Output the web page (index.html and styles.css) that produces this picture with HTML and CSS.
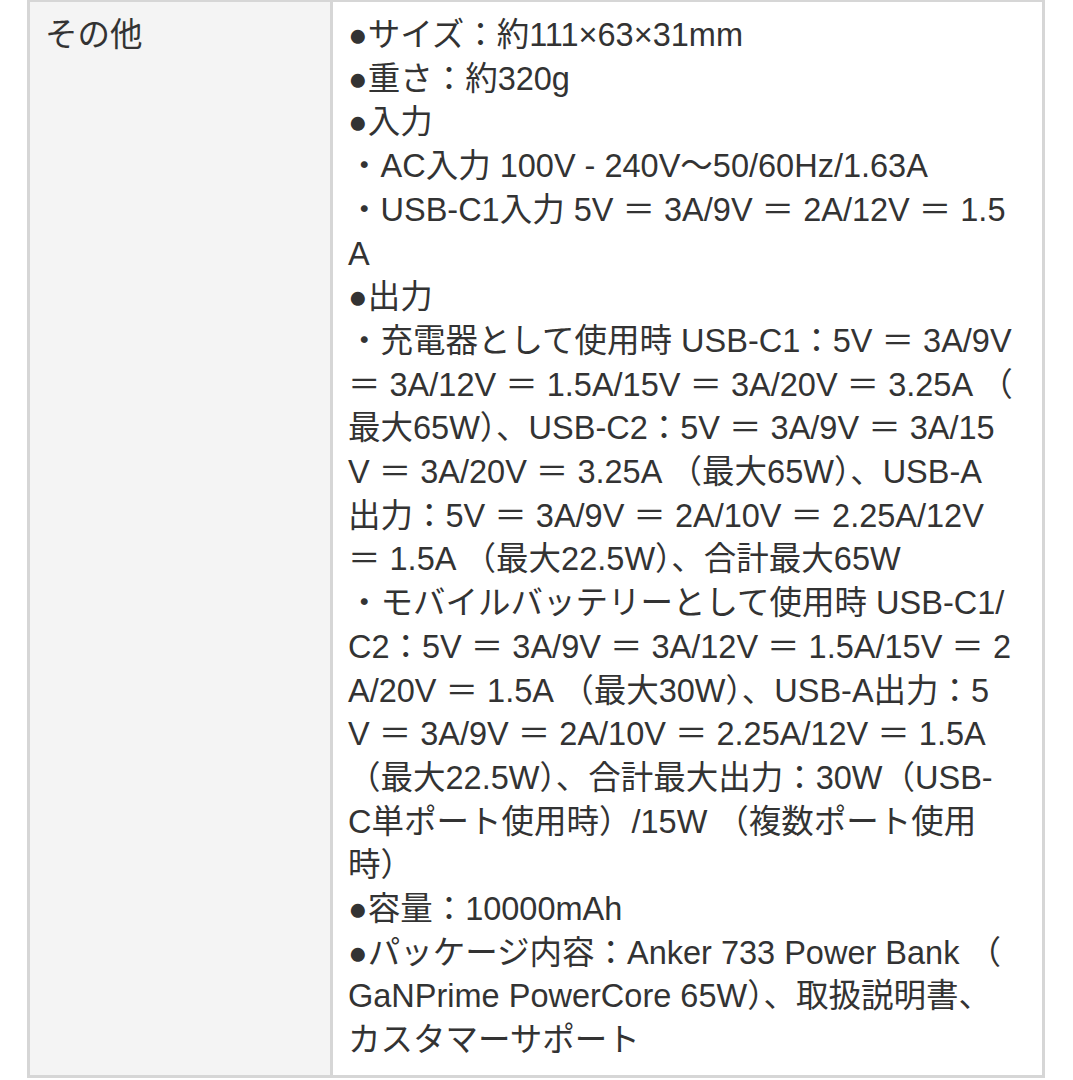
FILE: index.html
```html
<!DOCTYPE html>
<html lang="ja">
<head>
<meta charset="utf-8">
<title>仕様</title>
<link rel="stylesheet" href="styles.css">
</head>
<body>
<table class="spec">
  <tr>
    <th class="spec-label">その他</th>
    <td class="spec-value">●サイズ：約111×63×31mm<br>●重さ：約320g<br>●入力<br>・AC入力 100V - 240V〜50/60Hz/1.63A<br>・USB-C1入力 5V ＝ 3A/9V ＝ 2A/12V ＝ 1.5<br>A<br>●出力<br>・充電器として使用時 USB-C1：5V ＝ 3A/9V<br>＝ 3A/12V ＝ 1.5A/15V ＝ 3A/20V ＝ 3.25A （<br>最大65W）、USB-C2：5V ＝ 3A/9V ＝ 3A/15<br>V ＝ 3A/20V ＝ 3.25A （最大65W）、USB-A<br>出力：5V ＝ 3A/9V ＝ 2A/10V ＝ 2.25A/12V<br>＝ 1.5A （最大22.5W）、合計最大65W<br>・モバイルバッテリーとして使用時 USB-C1/<br>C2：5V ＝ 3A/9V ＝ 3A/12V ＝ 1.5A/15V ＝ 2<br>A/20V ＝ 1.5A （最大30W）、USB-A出力：5<br>V ＝ 3A/9V ＝ 2A/10V ＝ 2.25A/12V ＝ 1.5A<br>（最大22.5W）、合計最大出力：30W（USB-<br>C単ポート使用時）/15W （複数ポート使用<br>時）<br>●容量：10000mAh<br>●パッケージ内容：Anker 733 Power Bank （<br>GaNPrime PowerCore 65W）、取扱説明書、<br>カスタマーサポート</td>
  </tr>
</table>
</body>
</html>
```
FILE: styles.css
```css
html, body {
  margin: 0;
  padding: 0;
  background: #ffffff;
}

body {
  font-family: "Liberation Sans", "Noto Sans CJK JP", sans-serif;
  color: #333333;
  font-size: 32.5px;
  line-height: 43.7px;
}

.spec {
  border-collapse: collapse;
  table-layout: fixed;
  width: 1018px;
  margin: -1px 0 0 27px;
}

.spec-label,
.spec-value {
  border: 3px solid #d6d6d6;
  vertical-align: top;
  text-align: left;
  font-weight: normal;
  padding: 12px 15px 12px 15px;
}

.spec-label {
  width: 270px;
  background: #f4f4f4;
}

.spec-value {
  background: #ffffff;
  white-space: nowrap;
}
```
